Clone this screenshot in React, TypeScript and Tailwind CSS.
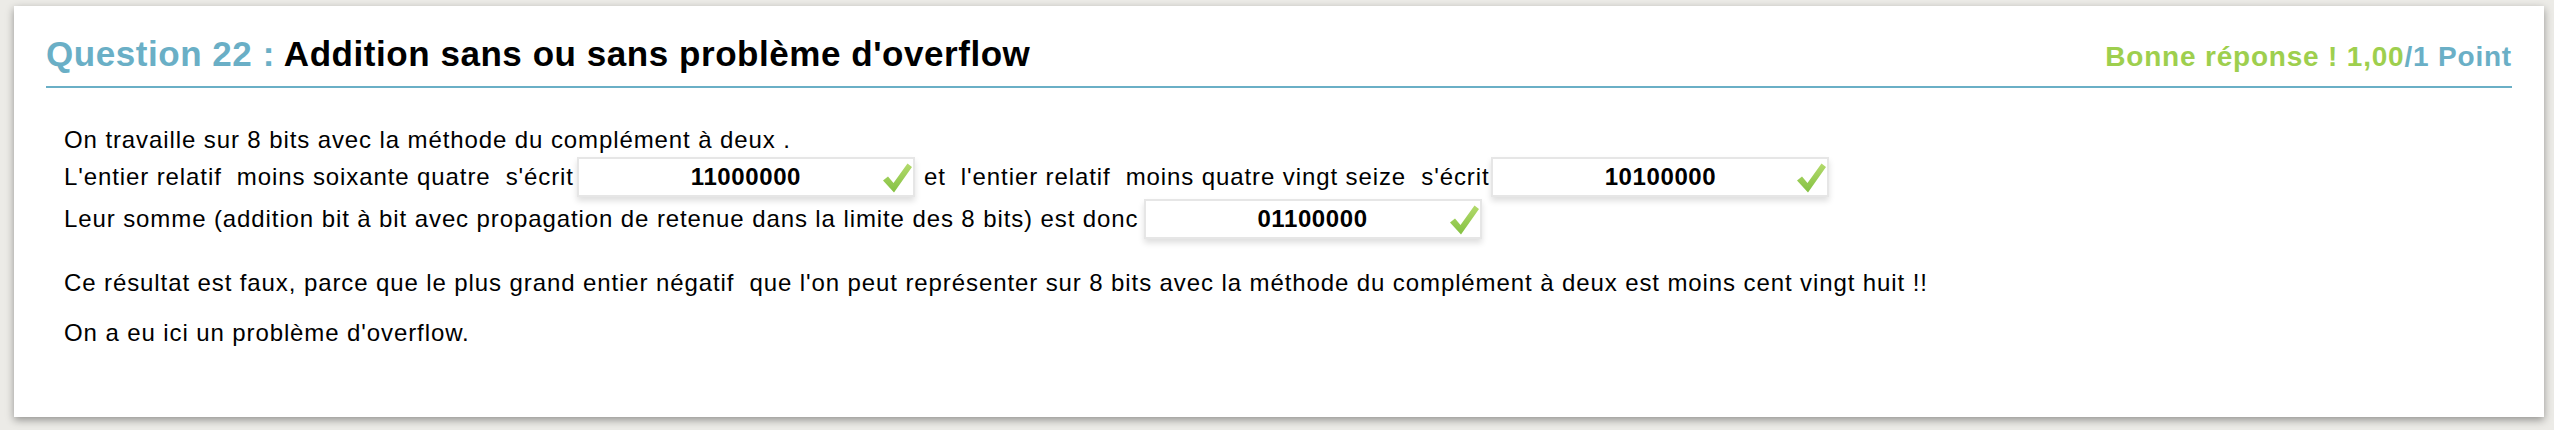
import React from "react";

const Check = () => (
  <svg width="30" height="31" viewBox="0 0 30 31" className="absolute right-[1px] top-[3px]">
    <defs>
      <linearGradient id="ckg" x1="0" y1="0" x2="0" y2="1">
        <stop offset="0%" stopColor="#b3da6c" />
        <stop offset="100%" stopColor="#84c142" />
      </linearGradient>
    </defs>
    <path d="M1 18.5 L6 14.5 L11.5 21 L25.5 1.5 L30 5 L12 30.5 Z" fill="url(#ckg)" />
  </svg>
);

const Box = ({ value, className = "" }: { value: string; className?: string }) => (
  <div
    className={`relative flex h-[40px] w-[338px] shrink-0 items-center justify-center border-2 border-[#e6e6e6] bg-white shadow-[0_4px_6px_rgba(0,0,0,0.13)] ${className}`}
  >
    <span className="text-[24px] font-bold leading-none tracking-[0.6px] text-black">{value}</span>
    <Check />
  </div>
);

export default function App() {
  return (
    <div
      className="h-[430px] w-full overflow-hidden bg-[#ecebe7] pt-[6px] pl-[14px]"
      style={{ fontFamily: '"Liberation Sans", Arial, Helvetica, sans-serif' }}
    >
      <div className="h-[411px] w-[2530px] bg-white shadow-[0_3px_8px_rgba(0,0,0,0.38)]">
        <div className="mx-8">
          <div className="flex items-baseline justify-between border-b-2 border-[#6aafc6] pt-[30px] pb-[15px]">
            <div className="text-[35px] font-bold leading-none tracking-[0.55px]">
              <span className="text-[#6aafc6]">Question 22 : </span>
              <span className="text-black">Addition sans ou sans problème d'overflow</span>
            </div>
            <div className="text-[28px] font-bold leading-none tracking-[0.8px]">
              <span className="text-[#9ecf4e]">Bonne réponse ! 1,00</span>
              <span className="text-[#6aafc6]">/1 Point</span>
            </div>
          </div>

          <div className="whitespace-pre pt-[35px] pl-[18px] text-[24px] leading-none tracking-[0.9px] text-black">
            <div className="flex h-[34px] items-center">
              On travaille sur 8 bits avec la méthode du complément à deux .
            </div>
            <div className="flex h-[40px] items-center">
              <span>L'entier relatif  moins soixante quatre  s'écrit</span>
              <Box value="11000000" className="ml-[3px] mr-[9px]" />
              <span>et  l'entier relatif  moins quatre vingt seize  s'écrit</span>
              <Box value="10100000" className="ml-[2px]" />
            </div>
            <div className="mt-[2px] flex h-[40px] items-center">
              <span>Leur somme (addition bit à bit avec propagation de retenue dans la limite des 8 bits) est donc</span>
              <Box value="01100000" className="ml-[5px]" />
            </div>
            <div className="mt-[27px] flex h-[34px] items-center">
              Ce résultat est faux, parce que le plus grand entier négatif  que l'on peut représenter sur 8 bits avec la méthode du complément à deux est moins cent vingt huit !!
            </div>
            <div className="mt-[16px] flex h-[34px] items-center">On a eu ici un problème d'overflow.</div>
          </div>
        </div>
      </div>
    </div>
  );
}
